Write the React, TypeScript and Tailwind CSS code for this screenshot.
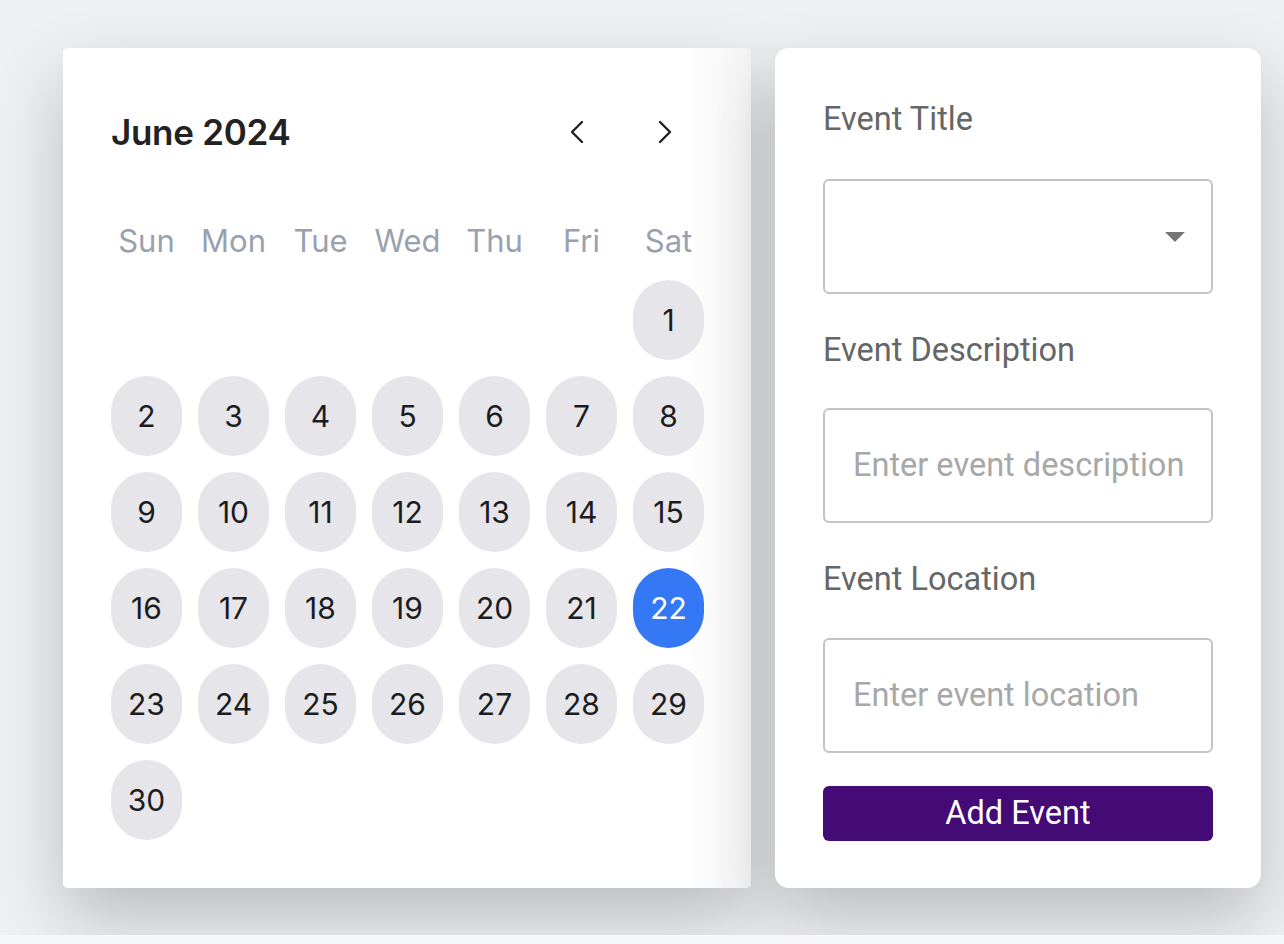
import React from 'react';

const weekDays = ['Sun', 'Mon', 'Tue', 'Wed', 'Thu', 'Fri', 'Sat'];

const Chevron: React.FC<{ dir: 'left' | 'right' }> = ({ dir }) => (
  <svg width="16" height="24" viewBox="0 0 16 24" fill="none">
    <polyline
      points={dir === 'left' ? '13,2 3,12 13,22' : '3,2 13,12 3,22'}
      stroke="#222222"
      strokeWidth="2.4"
      strokeLinecap="round"
      strokeLinejoin="round"
    />
  </svg>
);

const Calendar: React.FC = () => {
  // June 2024 starts on Saturday
  const cells: (number | null)[] = [null, null, null, null, null, null];
  for (let d = 1; d <= 30; d++) cells.push(d);

  return (
    <div className="w-[688px] h-[840px] rounded-[5px] bg-[linear-gradient(to_right,#ffffff_90%,#f4f4f5)] shadow-[0_30px_70px_rgba(0,0,0,0.22)] px-12 pt-12 font-['Inter',sans-serif]">
      <div className="flex h-[72px] items-center">
        <h2 className="flex-1 text-[35px] font-semibold text-[#222222] tracking-[-0.3px]">June 2024</h2>
        <div className="flex gap-[72px] pr-[30px]">
          <button className="flex items-center justify-center">
            <Chevron dir="left" />
          </button>
          <button className="flex items-center justify-center">
            <Chevron dir="right" />
          </button>
        </div>
      </div>
      <div className="mt-[50px] grid grid-cols-[repeat(7,71px)] gap-x-4 gap-y-4">
        {weekDays.map((d) => (
          <div key={d} className="flex h-[46px] items-center justify-center text-[31px] text-gray-400">
            {d}
          </div>
        ))}
        {cells.map((d, i) =>
          d === null ? (
            <div key={`e${i}`} className="h-20" />
          ) : (
            <div
              key={d}
              className={
                d === 22
                  ? 'flex h-20 items-center justify-center rounded-full bg-[#3478f6] text-[30px] text-white'
                  : 'flex h-20 items-center justify-center rounded-full bg-[#e5e5ea] text-[30px] text-[#1c1c1e]'
              }
            >
              {d}
            </div>
          )
        )}
      </div>
    </div>
  );
};

const EventForm: React.FC = () => (
  <div className="w-[486px] h-[840px] rounded-[14px] bg-white shadow-[0_30px_70px_rgba(0,0,0,0.22)] px-12 pt-[51px] font-['Roboto',sans-serif]">
    <label className="block h-[40px] text-[32.5px] leading-[40px] text-[#666666]">Event Title</label>
    <div className="mt-[40px] flex h-[115px] items-center justify-end rounded-[6px] border-2 border-[#c4c4c4] pr-[26px]">
      <svg width="20" height="10" viewBox="0 0 20 10">
        <polygon points="0,0 20,0 10,10" fill="#757575" />
      </svg>
    </div>
    <label className="mt-[36px] block h-[40px] text-[32.5px] leading-[40px] text-[#666666]">Event Description</label>
    <div className="mt-[38px] flex h-[115px] items-center rounded-[6px] border-2 border-[#c4c4c4] px-[28px]">
      <input
        placeholder="Enter event description"
        className="w-full bg-transparent text-[32.5px] text-[#333333] outline-none placeholder:text-[#a8a8a8]"
      />
    </div>
    <label className="mt-[36px] block h-[40px] text-[32.5px] leading-[40px] text-[#666666]">Event Location</label>
    <div className="mt-[39px] flex h-[115px] items-center rounded-[6px] border-2 border-[#c4c4c4] px-[28px]">
      <input
        placeholder="Enter event location"
        className="w-full bg-transparent text-[32.5px] text-[#333333] outline-none placeholder:text-[#a8a8a8]"
      />
    </div>
    <button className="mt-[33px] flex h-[55px] w-full items-center justify-center rounded-[6px] bg-[#440a76] text-[32.5px] text-white">
      Add Event
    </button>
  </div>
);

export default function App() {
  return (
    <div className="min-h-screen bg-[#f7f7f7]">
      <div className="flex h-[935px] gap-6 overflow-hidden bg-[#eff0f2] pl-[63px] pt-12">
        <Calendar />
        <EventForm />
      </div>
    </div>
  );
}
